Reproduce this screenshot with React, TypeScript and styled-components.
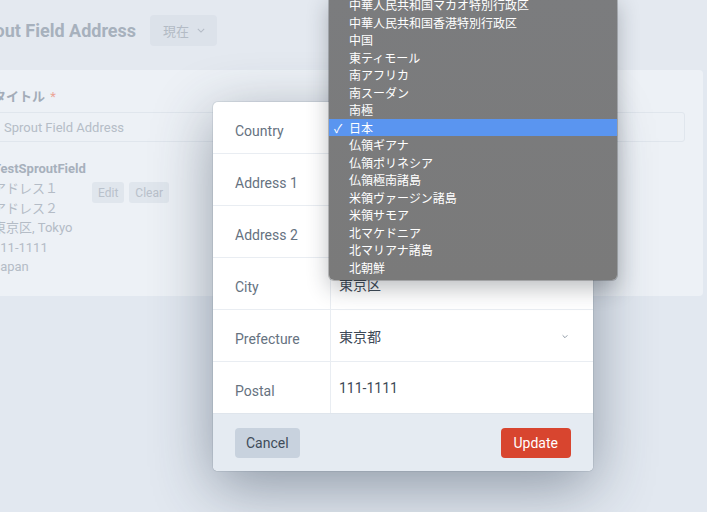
import styled, { createGlobalStyle } from "styled-components";

const GlobalStyle = createGlobalStyle`
  html, body {
    margin: 0;
    padding: 0;
  }
  body {
    font-family: "Roboto", "Noto Sans CJK JP", sans-serif;
    background: #e2e8f0;
  }
`;

const countries = [
  "中華人民共和国マカオ特別行政区",
  "中華人民共和国香港特別行政区",
  "中国",
  "東ティモール",
  "南アフリカ",
  "南スーダン",
  "南極",
  "日本",
  "仏領ギアナ",
  "仏領ポリネシア",
  "仏領極南諸島",
  "米領ヴァージン諸島",
  "米領サモア",
  "北マケドニア",
  "北マリアナ諸島",
  "北朝鮮",
];

const rows = [
  { label: "Country", value: "" },
  { label: "Address 1", value: "" },
  { label: "Address 2", value: "" },
  { label: "City", value: "東京区" },
  { label: "Prefecture", value: "東京都", select: true },
  { label: "Postal", value: "111-1111" },
];

const addressLines = ["アドレス１", "アドレス２", "東京区, Tokyo", "111-1111", "Japan"];

const App = () => {
  return (
    <Screen>
      <GlobalStyle />
      <Header>
        <PageTitle>Sprout Field Address</PageTitle>
        <SiteButton>
          現在 <Chevron viewBox="0 0 10 6"><path d="M1 1l4 4 4-4" /></Chevron>
        </SiteButton>
      </Header>
      <Panel>
        <FieldLabel>
          タイトル <Required>*</Required>
        </FieldLabel>
        <TitleInput>Sprout Field Address</TitleInput>
        <FieldName>TestSproutField</FieldName>
        <AddressBlock>
          <AddressLines>
            {addressLines.map((l) => (
              <div key={l}>{l}</div>
            ))}
          </AddressLines>
          <SmallButtons>
            <SmallButton>Edit</SmallButton>
            <SmallButton>Clear</SmallButton>
          </SmallButtons>
        </AddressBlock>
      </Panel>

      <Modal>
        <ModalBody>
          {rows.map((r) => (
            <Row key={r.label}>
              <RowLabel>{r.label}</RowLabel>
              <RowValue>
                {r.value}
                {r.select && (
                  <SelectChevron viewBox="0 0 10 6">
                    <path d="M2 1.5l3 3 3-3" />
                  </SelectChevron>
                )}
              </RowValue>
            </Row>
          ))}
        </ModalBody>
        <ModalFooter>
          <FooterButton variant="cancel">Cancel</FooterButton>
          <FooterButton variant="submit">Update</FooterButton>
        </ModalFooter>
      </Modal>

      <Menu>
        {countries.map((c) => (
          <MenuItem key={c} selected={c === "日本"}>
            <Check>{c === "日本" ? "✓" : ""}</Check>
            {c}
          </MenuItem>
        ))}
      </Menu>
    </Screen>
  );
};

const Screen = styled.div`
  position: relative;
  width: 707px;
  height: 512px;
  overflow: hidden;
  background: #e2e8f0;
`;

const Header = styled.div`
  height: 70px;
  display: flex;
  align-items: center;
  gap: 14px;
  padding-bottom: 10px;
  box-sizing: border-box;
  margin-left: -33px;
  background: #e4e9f0;
`;

const PageTitle = styled.h1`
  margin: 0;
  font-size: 18px;
  font-weight: 700;
  color: #a7b1bd;
  white-space: nowrap;
`;

const SiteButton = styled.div`
  display: flex;
  align-items: center;
  gap: 8px;
  height: 31px;
  padding: 0 12px 0 13px;
  border-radius: 4px;
  background: #dce2ea;
  color: #b3bbc5;
  font-size: 13px;
`;

const Chevron = styled.svg`
  width: 8px;
  height: 5px;
  fill: none;
  stroke: #b3bbc5;
  stroke-width: 1.3;
`;

const Panel = styled.div`
  height: 226px;
  margin-left: -7px;
  margin-right: 4px;
  padding: 18px 0 0;
  box-sizing: border-box;
  background: #edf1f6;
  border-radius: 0 4px 4px 0;
`;

const FieldLabel = styled.div`
  font-size: 13px;
  font-weight: 700;
  color: #a3acb8;
  line-height: 18px;
  white-space: nowrap;
`;

const Required = styled.span`
  color: #eba596;
  font-weight: 400;
  margin-left: 2px;
`;

const TitleInput = styled.div`
  margin-top: 6px;
  width: 692px;
  height: 30px;
  box-sizing: border-box;
  padding: 0 0 0 10px;
  display: flex;
  align-items: center;
  border: 1px solid #e0e6ed;
  border-radius: 3px;
  font-size: 13px;
  color: #b5bdc7;
`;

const FieldName = styled.div`
  margin-top: 18px;
  font-size: 13px;
  font-weight: 700;
  color: #a7b0bc;
  line-height: 18px;
  white-space: nowrap;
`;

const AddressBlock = styled.div`
  display: flex;
  align-items: flex-start;
  gap: 26px;
  margin-top: 1px;
`;

const AddressLines = styled.div`
  font-size: 13px;
  line-height: 19.5px;
  color: #b4bcc6;
  width: 73px;
  white-space: nowrap;
`;

const SmallButtons = styled.div`
  display: flex;
  gap: 5px;
  padding-top: 3px;
`;

const SmallButton = styled.div`
  height: 21px;
  padding: 0 6px;
  display: flex;
  align-items: center;
  border-radius: 3px;
  background: #e0e6ed;
  color: #b9c1cb;
  font-size: 12px;
`;

const Modal = styled.div`
  position: absolute;
  left: 213px;
  top: 102px;
  width: 380px;
  border-radius: 5px;
  overflow: hidden;
  background: #fff;
  box-shadow: 0 0 0 1px rgba(60, 75, 95, 0.1), 0 16px 60px rgba(40, 55, 75, 0.45);
`;

const ModalBody = styled.div`
  display: flex;
  flex-direction: column;
`;

const Row = styled.div`
  display: grid;
  grid-template-columns: 118px 1fr;
  height: 52px;
  box-sizing: border-box;
  border-bottom: 1px solid #e9edf2;
  &:last-child {
    border-bottom: 1px solid #dfe5ec;
  }
`;

const RowLabel = styled.div`
  display: flex;
  align-items: center;
  padding-left: 22px;
  padding-top: 7px;
  border-right: 1px solid #e9edf2;
  font-size: 14px;
  color: #66727f;
`;

const RowValue = styled.div`
  display: flex;
  align-items: center;
  justify-content: space-between;
  padding: 1px 24px 0 8px;
  font-size: 14px;
  color: #3d4956;
`;

const SelectChevron = styled.svg`
  width: 8px;
  height: 5px;
  fill: none;
  stroke: #8a95a1;
  stroke-width: 1.2;
`;

const ModalFooter = styled.div`
  display: flex;
  align-items: center;
  justify-content: space-between;
  height: 57px;
  padding: 0 22px;
  background: #e5ebf2;
`;

const FooterButton = styled.div<{ variant: "cancel" | "submit" }>`
  height: 30px;
  padding: 0 ${({ variant }) => (variant === "submit" ? "13px" : "11px")};
  display: flex;
  align-items: center;
  border-radius: 4px;
  font-size: 14px;
  background: ${({ variant }) => (variant === "submit" ? "#d8452f" : "#c8d2de")};
  color: ${({ variant }) => (variant === "submit" ? "#fff" : "#3f4c59")};
`;

const Menu = styled.div`
  position: absolute;
  left: 329px;
  top: -4px;
  width: 288px;
  padding-bottom: 4px;
  border-radius: 0 0 5px 5px;
  background: linear-gradient(180deg, #7b7c7e 0%, #7a7a7a 100%);
  box-shadow: 0 0 0 1px rgba(40, 40, 40, 0.25), 0 8px 22px rgba(30, 35, 45, 0.3);
`;

const MenuItem = styled.div<{ selected: boolean }>`
  display: flex;
  align-items: center;
  height: 17.5px;
  font-size: 12px;
  color: #fff;
  background: ${({ selected }) => (selected ? "#5a95f0" : "transparent")};
`;

const Check = styled.span`
  width: 20px;
  padding-left: 5px;
  box-sizing: border-box;
  font-size: 12px;
`;

export default App;
